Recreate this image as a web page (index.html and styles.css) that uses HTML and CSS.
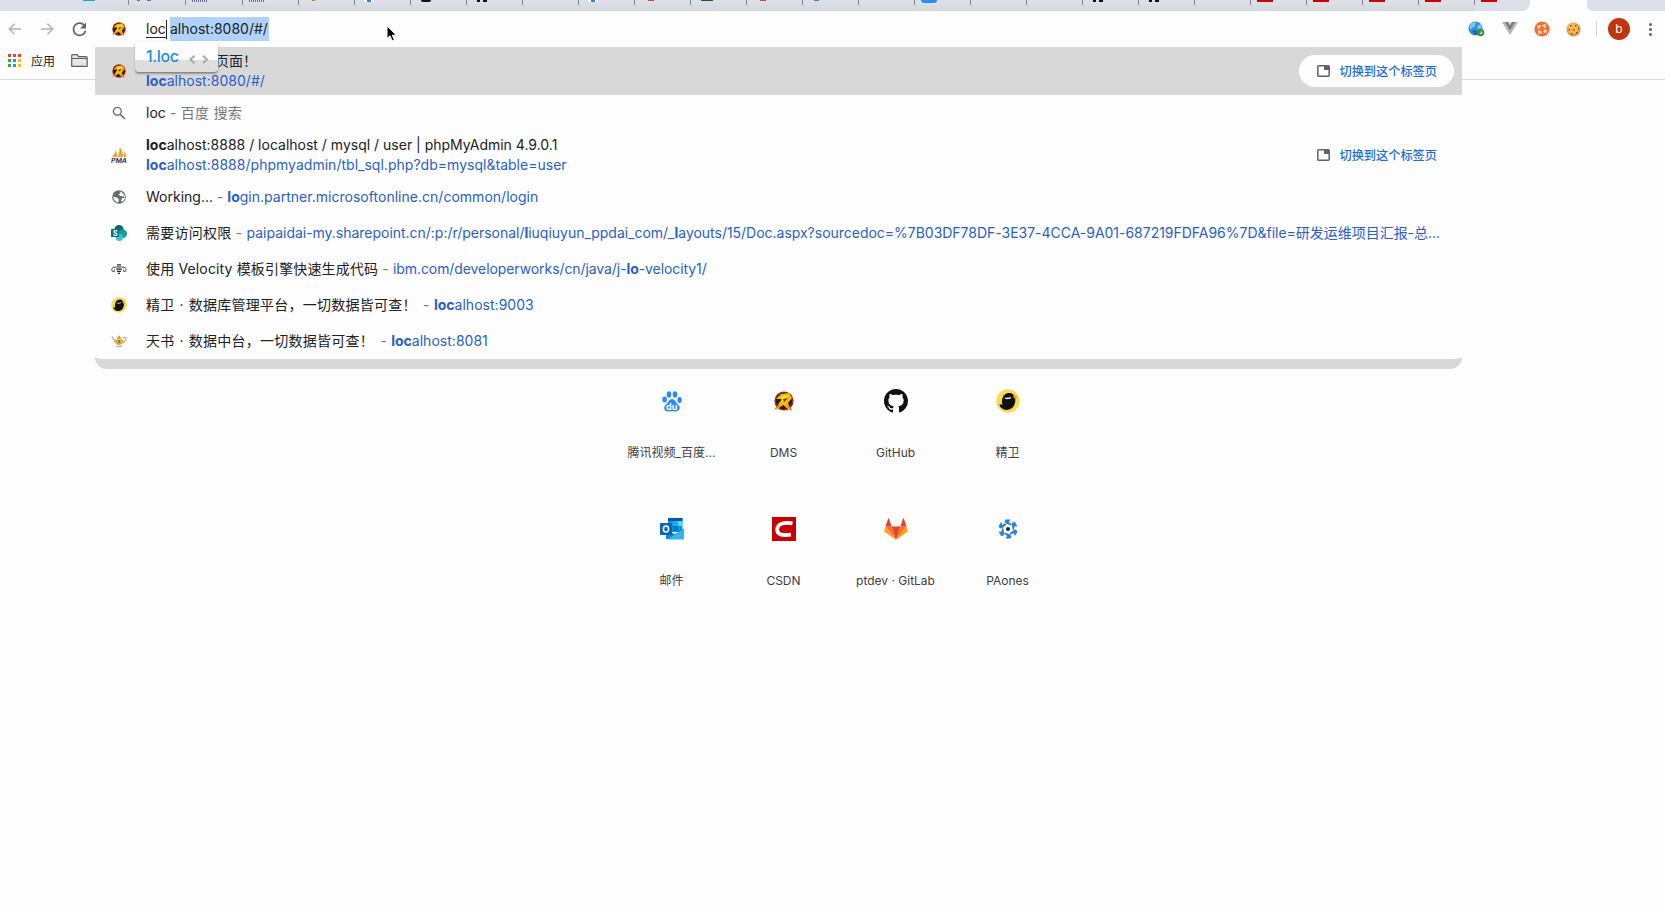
FILE: index.html
```
<!DOCTYPE html>
<html lang="zh-CN">
  <head>
    <meta charset="UTF-8" />
    <meta name="viewport" content="width=device-width, initial-scale=1.0" />
    <title>新标签页</title>
    <link rel="stylesheet" href="styles.css">
  </head>
  <body>
    <!-- Shared icons -->
    <svg class="defs" width="0" height="0">
      <symbol id="dms" viewBox="0 0 20 20">
        <circle cx="10" cy="10" r="9.6" fill="#a82418" />
        <circle cx="10" cy="10" r="8" fill="#241a12" />
        <path d="M2 8 7 3l8-1 3 5-4 5 3.500 8-5-3-3-3-8 5 4-8 4-3-3 0z" fill="#f5b80f" />
        <path d="M8 5l7-1-3 4-5 3z" fill="#ffe02e" />
        <path d="M9 8l5-1-4 4z" fill="#6b3a0c" />
        <path d="M1 18l5-4M13 14l4.500 5" stroke="#f07a1b" stroke-width="1.600" />
      </symbol>
      <symbol id="bird" viewBox="0 0 24 24">
        <circle cx="12" cy="12" r="11.700" fill="#f8dc58" />
        <path d="M7 8c1-4 8-5.500 10.500-2.500 2.500 3 2.500 8 0 12-3 4-9 4.500-12 1.500-1.500-1-2-2.500-2-4l3 1c-1-3-.8-5 .5-8z" fill="#111" />
        <path d="M9 8.500c1 1.500 2 1.500 3 .3 1 1 2 .8 2.600-.8" stroke="#fff" fill="none" stroke-width="1.200" />
        <path d="M17 5l4 2.500-1 3-2.500-2z" fill="#e8a520" />
      </symbol>
      <symbol id="switch" viewBox="0 0 13 12">
        <path d="M1.500.8h10a.8.8 0 0 1 .7.700v9a.8.8 0 0 1-.7.700h-10a.8.8 0 0 1-.7-.7v-9a.8.8 0 0 1 .7-.7z" fill="none" stroke="#5f6368" stroke-width="1.500" />
        <path d="M7 1h5.500v4H7z" fill="#5f6368" />
      </symbol>
    </svg>

    <div class="tab-strip">
      <div class="tab first"><i class="fav sky"></i></div>
      <div class="tab wide"><i class="fav slate"></i></div>
      <div class="tab wide"><i class="fav dots"></i></div>
      <div class="tab"><i class="fav dots"></i></div>
      <div class="tab"><i class="fav orange"></i></div>
      <div class="tab"><i class="fav white"></i></div>
      <div class="tab"><i class="fav black"></i></div>
      <div class="tab"><i class="fav cat"></i></div>
      <div class="tab"></div>
      <div class="tab"><i class="fav white"></i></div>
      <div class="tab"><i class="fav red"></i></div>
      <div class="tab"><i class="fav green"></i></div>
      <div class="tab"><i class="fav red"></i></div>
      <div class="tab"><i class="fav paw"></i></div>
      <div class="tab"></div>
      <div class="tab"><i class="fav blue"></i></div>
      <div class="tab"></div>
      <div class="tab"></div>
      <div class="tab"><i class="fav cat"></i></div>
      <div class="tab"><i class="fav cat"></i></div>
      <div class="tab"></div>
      <div class="tab"><i class="fav csdn"></i></div>
      <div class="tab"><i class="fav csdn"></i></div>
      <div class="tab"><i class="fav csdn"></i></div>
      <div class="tab"><i class="fav csdn"></i></div>
      <div class="tab last"><i class="fav csdn"></i></div>
      <div class="active-tab"></div>
      <div class="strip-end"></div>
    </div>

    <div class="toolbar">
      <svg class="nav" width="14" height="12" viewBox="0 0 14 12"><path d="M13 6H1.500M6.500.8 1.300 6l5.200 5.200" /></svg>
      <svg class="nav forward" width="14" height="12" viewBox="0 0 14 12"><path d="M1 6h11.500M7.500.8 12.700 6l-5.200 5.200" /></svg>
      <svg class="reload" width="15" height="15" viewBox="0 0 15 15"><path d="M12.200 3.300A6.100 6.100 0 1 0 13.500 8.800" fill="none" stroke="#5f6368" stroke-width="1.700" /><path d="M14 .5v6H8z" fill="#5f6368" /></svg>
      <svg class="site" width="14" height="14"><use href="#dms" /></svg>
      <div class="url"><span class="typed">loc</span><span class="completion">alhost:8080/#/</span></div>
      <div class="extensions">
        <svg width="18" height="16" viewBox="0 0 18 16">
          <circle cx="7.500" cy="7.500" r="7" fill="#2f8fd8" />
          <path d="M3 2l5-1-1 4-4 3-2-1zM9 5l4-2 1 4-4 2z" fill="#7fc4ee" />
          <path d="M4 10l4-1 1 4-2 1z" fill="#1b5fa8" />
          <circle cx="12.500" cy="11.500" r="2.800" fill="none" stroke="#3e8f2c" stroke-width="2" />
        </svg>
        <svg width="16" height="14" viewBox="0 0 16 14"><path d="M0 0h16L8 13z" fill="#b3b3b3" /><path d="M3 0h10L8 8z" fill="#777" /><path d="M6 0h4L8 3.500z" fill="#ddd" /></svg>
        <svg width="16" height="16" viewBox="0 0 16 16"><circle cx="8" cy="8" r="7.600" fill="#f9702b" /><circle cx="8" cy="8" r="3.700" fill="none" stroke="#fff" stroke-width="1.600" stroke-dasharray="3.800 2" /><path d="M3 4.500l1.500 1M11.500 3l-1 1.500M13 11.500l-1.500-1M4.500 13l1-1.500" stroke="#fff" stroke-width="1.200" /></svg>
        <svg width="15" height="15" viewBox="0 0 15 15"><circle cx="7.500" cy="7.500" r="7" fill="#e09a3c" /><circle cx="6.700" cy="6.500" r="5.600" fill="#f0b659" /><path d="M4 3h1.500v1.500H4zM9 3h1.500v1.500H9zM2.500 7H4v1.500H2.500zM7 7h1.500v1.500H7zM5 11h1.500v1.500H5zM10 10h1.500v1.500H10zM12 6h1v1.500h-1z" fill="#8a501f" /></svg>
        <div class="divider"></div>
        <div class="avatar">b</div>
        <div class="menu"><i></i><i></i><i></i></div>
      </div>
    </div>

    <div class="bookmarks">
      <div class="apps"><i class="r"></i><i class="r"></i><i class="r"></i><i class="g"></i><i class="b"></i><i class="y"></i><i class="g"></i><i class="b"></i><i class="y"></i></div>
      <span>应用</span>
      <svg width="17" height="13" viewBox="0 0 17 13"><path d="M.7 12V1.500q0-.8.8-.8H6l1.500 2H15q1.200 0 1.200 1V12q0 .4-.5.4H1.200q-.5 0-.5-.4zM.7 4.500h15.500" fill="#e6e6e6" stroke="#5f5f5f" stroke-width="1.200" /></svg>
    </div>

    <div class="suggestions">
      <div class="row double selected">
        <svg class="icon" width="14" height="14"><use href="#dms" /></svg>
        <div class="text">
          <p class="title page-title">页面！</p>
          <p class="link"><b>loc</b>alhost:8080/#/</p>
        </div>
        <div class="switch"><svg width="13" height="12"><use href="#switch" /></svg>切换到这个标签页</div>
      </div>
      <div class="row">
        <svg class="icon" width="14" height="14" viewBox="0 0 14 14"><circle cx="5.300" cy="5.300" r="3.900" fill="none" stroke="#6b6f73" stroke-width="1.400" /><path d="M8.300 8.300l4.700 4.700" stroke="#6b6f73" stroke-width="1.700" /></svg>
        <p class="text">loc<span class="muted cjk"> - 百度 搜索</span></p>
      </div>
      <div class="row double">
        <svg class="icon" width="16" height="16" viewBox="0 0 16 16"><path d="M1 10Q4 7 4.500 3q2 4 1.500 7zM6.500 10Q9 5 8.500 0q4 5 3.500 10zM12.500 10q1-3 .5-6 2 3 2.500 6z" fill="#f5a035" /><text x="0" y="15.500" font-size="6.500" font-weight="bold" font-style="italic" textLength="16" lengthAdjust="spacingAndGlyphs" fill="#39405e">PMA</text></svg>
        <div class="text">
          <p class="title"><b>loc</b>alhost:8888 / localhost / mysql / user | phpMyAdmin 4.9.0.1</p>
          <p class="link"><b>loc</b>alhost:8888/phpmyadmin/tbl_sql.php?db=mysql&amp;table=user</p>
        </div>
        <div class="switch"><svg width="13" height="12"><use href="#switch" /></svg>切换到这个标签页</div>
      </div>
      <div class="row">
        <svg class="icon" width="14" height="14" viewBox="0 0 14 14"><circle cx="7" cy="7" r="6.800" fill="#686c70" /><path d="M1.300 6.500l4 1.200 1.700 2-1 3Q1.500 11.500 1.300 6.500zM7.500 1.500l1 1.500-2 1.500L8.500 6l3.500.5.500 1.500-2.500 0-1 3 1.500.5q3-2 2.300-5.500Q11 2 7.500 1.500z" fill="#fff" /></svg>
        <p class="text">Working...<span class="muted"> - </span><span class="link"><b>lo</b>gin.partner.microsoftonline.cn/common/login</span></p>
      </div>
      <div class="row">
        <svg class="icon" width="16" height="16" viewBox="0 0 16 16"><circle cx="8" cy="4.700" r="4.700" fill="#036c70" /><circle cx="11.800" cy="8.800" r="4.200" fill="#1a9ba1" /><circle cx="8.400" cy="12.500" r="3.500" fill="#37c6d0" /><rect y="4" width="8" height="8" rx=".6" fill="#03787c" /><text x="2" y="10.500" font-size="7" font-weight="bold" fill="#fff">S</text></svg>
        <p class="text"><span class="cjk">需要访问权限<span class="muted"> - </span></span><span class="link long">paipaidai-my.sharepoint.cn/:p:/r/personal/<b>l</b>iuqiuyun_ppdai_com/_<b>l</b>ayouts/15/Doc.aspx?sourcedoc=%7B03DF78DF-3E37-4CCA-9A01-687219FDFA96%7D&amp;file=研发运维项目汇报-总...</span></p>
      </div>
      <div class="row">
        <svg class="icon" width="16" height="10" viewBox="0 0 16 10"><path d="M6 .8h4M5.300 3h5.400M5.300 5.200h5.400M6 7.300h4M7 9.300h2" stroke="#222" stroke-width="1.200" /><path d="M5 3Q1 2.500.7 5.500.8 8 3 7.500 4.500 7 3.500 5.500M11 3q4-.5 4.300 2.500Q15.200 8 13 7.500q-1.500-.5-.5-2" fill="none" stroke="#333" stroke-width=".9" /></svg>
        <p class="text"><span class="velocity">使用 Velocity 模板引擎快速生成代码<span class="muted"> - </span></span><span class="link ibm">ibm.com/developerworks/cn/java/j-<b>lo</b>-velocity1/</span></p>
      </div>
      <div class="row">
        <svg class="icon" width="16" height="16"><use href="#bird" /></svg>
        <p class="text"><span class="cjk">精卫<span class="dot">·</span>数据库管理平台，一切数据皆可查！<span class="muted after-mark"> - </span></span><span class="link"><b>loc</b>alhost:9003</span></p>
      </div>
      <div class="row">
        <svg class="icon" width="16" height="12" viewBox="0 0 16 12"><path d="M1 1.500q2 4 4 6M12 3q3.500-2 3 1-.5 3-4 4" fill="none" stroke="#e07a5a" /><path d="M3.500 4.500h9q0 4-3.500 5.500H7Q3.500 8 3.500 4.500z" fill="#e9a72b" /><path d="M5.500 4 8 .3 10.500 4z" fill="#d99a20" /><path d="M7 5h2v3H7z" fill="#3e9aa0" /><path d="M5 11.300h6" stroke="#d09a80" /></svg>
        <p class="text"><span class="cjk">天书<span class="dot">·</span>数据中台，一切数据皆可查！<span class="muted after-mark"> - </span></span><span class="link"><b>loc</b>alhost:8081</span></p>
      </div>
    </div>

    <!-- Input method candidates -->
    <div class="ime"><span>1.loc</span><svg width="20" height="9" viewBox="0 0 20 9"><path d="M5.500.8 1.500 4.500l4 3.700M14 .8l4 3.700-4 3.700" /></svg></div>

    <svg class="cursor" width="13" height="17" viewBox="0 0 13 17"><path d="M1 1v12.500l3-2.700 2.200 5 2.200-1-2.200-4.600h4.300z" fill="#000" stroke="#fff" /></svg>

    <div class="shortcuts">
      <div class="tile">
        <svg width="24" height="24" viewBox="0 0 24 24"><g fill="#3088f4"><ellipse cx="4.600" cy="10.500" rx="2.300" ry="3" /><ellipse cx="9" cy="5.500" rx="2.300" ry="3.200" /><ellipse cx="15" cy="5.500" rx="2.300" ry="3.200" /><ellipse cx="19.600" cy="11" rx="2.300" ry="3" /><path d="M12 10c3 0 4 4 6.500 6 3 3 0 7-3 6.500-2-.4-5-.4-7 0-3.500.5-6-3.500-3-6.500C8 14 9 10 12 10z" /></g><text x="6" y="20.500" font-size="9" font-weight="bold" fill="#fff">du</text></svg>
        <span>腾讯视频_百度...</span>
      </div>
      <div class="tile">
        <svg width="20" height="20"><use href="#dms" /></svg>
        <span>DMS</span>
      </div>
      <div class="tile">
        <svg width="24" height="24" viewBox="0 0 16 16"><path d="M8 0C3.580 0 0 3.580 0 8c0 3.540 2.290 6.530 5.470 7.590.4.070.55-.17.55-.38 0-.19-.01-.82-.01-1.490-2.010.37-2.530-.49-2.690-.94-.09-.23-.48-.94-.82-1.130-.28-.15-.68-.52-.01-.53.63-.01 1.080.58 1.230.82.720 1.210 1.870.87 2.330.66.070-.52.28-.87.51-1.070-1.780-.2-3.640-.89-3.640-3.950 0-.87.31-1.590.82-2.150-.08-.2-.36-1.020.08-2.120 0 0 .67-.21 2.200.82.640-.18 1.320-.27 2-.27s1.360.09 2 .27c1.530-1.040 2.200-.82 2.200-.82.440 1.100.16 1.920.08 2.120.51.56.82 1.270.82 2.150 0 3.070-1.870 3.750-3.650 3.950.29.25.54.73.54 1.480 0 1.070-.01 1.930-.01 2.200 0 .21.15.46.55.38A8.010 8.010 0 0 0 16 8c0-4.420-3.580-8-8-8z" fill="#111" /></svg>
        <span>GitHub</span>
      </div>
      <div class="tile">
        <svg width="24" height="24"><use href="#bird" /></svg>
        <span>精卫</span>
      </div>
      <div class="tile">
        <svg width="24" height="22" viewBox="0 0 24 22"><path d="M8 0h14.500v14H8z" fill="#1490df" /><path d="M8 0h14.500v3H8z" fill="#0358a7" /><path d="M13 3h5v5h-5z" fill="#28a8ea" /><path d="M18 3h4.500v5H18z" fill="#50d9ff" /><path d="M13 8h5v5h-5z" fill="#0078d4" /><path d="M6 12l9 4 9-5.500V21H6z" fill="#1a86d4" /><path d="M24 11v10.500H7z" fill="#36b4ee" /><rect y="5" width="12" height="12" rx="1" fill="#0a64bd" /><ellipse cx="6" cy="11" rx="2.600" ry="3" fill="none" stroke="#fff" stroke-width="1.600" /></svg>
        <span>邮件</span>
      </div>
      <div class="tile">
        <svg width="24" height="24" viewBox="0 0 24 24"><path d="M0 0h24v24H0z" fill="#c90000" /><path d="M20.500 6.300C13 5 5.500 6 5.200 12.500 5 18.500 12 18.500 19 17.700" fill="none" stroke="#fff" stroke-width="3.800" /></svg>
        <span>CSDN</span>
      </div>
      <div class="tile">
        <svg width="24" height="22" viewBox="0 0 24 22"><path d="M12 22 7.600 8.500h8.800z" fill="#e24329" /><path d="M12 22 7.600 8.500H1.500zM12 22l4.400-13.500h6.100z" fill="#fc6d26" /><path d="M1.500 8.500.1 12.700q-.2.700.4 1.100L12 22zM22.500 8.500l1.400 4.200q.2.700-.4 1.100L12 22z" fill="#fca326" /><path d="M1.500 8.500h6.100L5 .5q-.4-.7-.8 0zM22.500 8.500h-6.100L19 .5q.4-.7.8 0z" fill="#e24329" /></svg>
        <span>ptdev · GitLab</span>
      </div>
      <div class="tile">
        <svg width="20" height="20" viewBox="-10 -10 20 20">
          <path id="blade" d="M-2.500-9.500 2.500-9.500.8-7 4-4.500 2.500-3.800-1.500-5.300-3.500-7z" fill="#2481dc" />
          <use href="#blade" transform="rotate(60)" /><use href="#blade" transform="rotate(120)" /><use href="#blade" transform="rotate(180)" /><use href="#blade" transform="rotate(240)" /><use href="#blade" transform="rotate(300)" />
          <circle r="2" fill="#222" />
        </svg>
        <span>PAones</span>
      </div>
    </div>
  </body>
</html>
```
FILE: styles.css
```
* {
  box-sizing: border-box;
  margin: 0;
  padding: 0;
}
body {
  font-family: Inter, "Noto Sans CJK SC", sans-serif;
  font-size: 14px;
  color: #202124;
  background: #fdfdfd;
  height: 910px;
  overflow: hidden;
  position: relative;
}
svg {
  display: block;
  flex: none;
}
.defs {
  position: absolute;
}

/* Tabs */
.tab-strip {
  display: flex;
  height: 11px;
  background: linear-gradient(#dbdfe7 3px, #d6d9de 9px, #d3d3d4) 0 0 / 1475px 11px no-repeat;
}
.tab {
  width: 56px;
  flex: none;
  padding-left: 7px;
  background: linear-gradient(#85878b, #85878b) 0 0 / 1px 5px no-repeat;
}
.tab.first {
  width: 128px;
  padding-left: 83px;
  background: linear-gradient(90deg, #dbdfe7 85px, transparent);
}
.tab.wide {
  width: 57px;
}
.tab.last {
  background: linear-gradient(#85878b, #85878b) 0 0 / 1px 5px no-repeat, #dbdfe7;
  border-bottom-right-radius: 8px;
}
.active-tab {
  width: 57px;
}
.strip-end {
  flex: 1;
  background: #dbdfe7;
  border-bottom-left-radius: 6px;
}
.fav {
  display: block;
  width: 16px;
  height: 2px;
}
.sky {
  width: 12px;
  height: 1px;
  background: #1aa0e8;
}
.slate {
  width: 14px;
  margin-left: 2px;
  height: 1px;
  background: linear-gradient(90deg, #56799e 3px, transparent 3px 10px, #56799e 10px);
}
.dots {
  background: repeating-linear-gradient(90deg, #6a6a94 0 1px, #dfe2ea 1px 2px);
}
.orange {
  width: 3px;
  height: 1px;
  margin-left: 7px;
  background: #f26b21;
}
.white {
  width: 10px;
  margin-left: 3px;
  background: linear-gradient(90deg, #fff 3px, #2f80e0 3px 7px, #fff 7px);
  border-radius: 0 0 5px 5px;
}
.black {
  width: 10px;
  margin-left: 4px;
  background: #111;
  border-radius: 0 0 5px 5px;
}
.cat {
  width: 10px;
  margin-left: 4px;
  background: linear-gradient(90deg, #111 3px, transparent 3px 6px, #111 6px);
}
.red {
  width: 6px;
  height: 1px;
  margin-left: 7px;
  background: #d4482f;
}
.green {
  width: 12px;
  height: 1px;
  margin-left: 4px;
  background: #0d5c34;
}
.paw {
  width: 5px;
  height: 1px;
  margin-left: 5px;
  background: #3b82d8;
}
.blue {
  height: 3px;
  background: #2d8cff;
  border-radius: 0 0 3px 3px;
}
.csdn {
  background: #c90000;
}

/* Toolbar */
.toolbar {
  display: flex;
  align-items: center;
  height: 36px;
  padding-left: 8px;
}
.nav {
  fill: none;
  stroke: #b1b3b5;
  stroke-width: 1.5;
}
.forward {
  margin-left: 18px;
}
.reload {
  margin-left: 18px;
}
.site {
  margin-left: 25px;
}
.url {
  display: flex;
  margin-left: 20px;
  line-height: 24px;
}
.typed {
  height: 19px;
  line-height: 18px;
  margin: 3px 3px 0 0;
  width: 21px;
  border-right: 1px solid #222;
  text-decoration: underline;
  text-underline-offset: 3px;
}
.completion {
  width: 99px;
  background: #b0d2fa;
}
.extensions {
  display: flex;
  align-items: center;
  margin-left: auto;
  gap: 16px;
  padding-right: 13px;
}
.divider {
  width: 1px;
  height: 16px;
  background: #d0d2d5;
  margin-left: -1px;
}
.avatar {
  width: 22px;
  height: 22px;
  border-radius: 50%;
  background: #bf360c;
  color: #fff;
  font-size: 12px;
  line-height: 22px;
  text-align: center;
  margin-left: -5px;
}
.menu {
  display: flex;
  flex-direction: column;
  gap: 2px;
  margin-left: 3px;
}
.menu i {
  width: 3px;
  height: 3px;
  border-radius: 50%;
  background: #5f6368;
}

/* Bookmarks bar */
.bookmarks {
  display: flex;
  align-items: center;
  height: 33px;
  padding: 0 8px 5px;
  font-size: 12px;
  border-bottom: 1px solid #d9dadf;
}
.bookmarks span {
  width: 40px;
  margin-left: 9px;
  margin-top: -1px;
}
.apps {
  display: grid;
  grid-template-columns: repeat(3, 4px);
  gap: 1px;
}
.apps i {
  height: 3px;
  width: 3px;
  margin-bottom: 1px;
}
.r { background: #ea4335; }
.g { background: #34a853; }
.b { background: #4285f4; }
.y { background: #fbbc05; }

/* Suggestion dropdown, covers the page */
.suggestions {
  position: absolute;
  top: 47px;
  left: 95px;
  width: 1367px;
  height: 322px;
  background: #fdfdfd;
  border-bottom: 10px solid #d8d8d8;
  border-radius: 0 0 12px 12px;
}
.row {
  display: flex;
  align-items: center;
  height: 36px;
  padding: 0 8px 0 51px;
  position: relative;
}
.double {
  height: 48px;
}
.selected {
  background: #d8d8d8;
}
.icon {
  position: absolute;
  left: 24px;
  transform: translateX(-50%);
}
.text {
  white-space: nowrap;
  line-height: 20px;
}
.page-title {
  padding-left: 69px;
}
.cjk {
  letter-spacing: 0.25px;
}
.velocity {
  letter-spacing: 0.15px;
}
.dot {
  margin: 0 5px;
}
.after-mark {
  margin-left: 2px;
}
.link {
  color: #2a5fc8;
  letter-spacing: 0.02px;
}
.link.long {
  letter-spacing: -0.02px;
}
.link.ibm {
  letter-spacing: -0.08px;
}
.muted {
  color: #76797c;
}
.text b {
  font-weight: 700;
}
.switch {
  display: flex;
  align-items: center;
  gap: 10px;
  margin-left: auto;
  height: 32px;
  padding: 0 17px 0 18px;
  border-radius: 16px;
  background: #fdfdfd;
  color: #1a6be0;
  font-size: 12.2px;
  font-weight: 500;
}

.ime {
  position: absolute;
  top: 41px;
  left: 135px;
  width: 83px;
  height: 32px;
  display: flex;
  align-items: center;
  gap: 10px;
  padding-left: 11px;
  font-size: 16px;
  font-weight: 500;
  letter-spacing: -0.35px;
  color: #1a8fd8;
  background: linear-gradient(#fdfdfd 19px, #dedede 19px);
  border-radius: 4px;
  border-bottom: 1px solid #888;
  box-shadow: 0 1px 2px #999;
}
.ime span {
  margin-top: -1px;
}
.ime svg {
  margin-top: 5px;
  fill: none;
  stroke: #aaa;
  stroke-width: 2;
}
.cursor {
  position: absolute;
  left: 386px;
  top: 25px;
}

/* Shortcuts */
.shortcuts {
  display: grid;
  grid-template-columns: repeat(4, 112px);
  grid-auto-rows: 128px;
  justify-content: center;
  padding-top: 309px;
  margin-left: 14px;
}
.tile {
  display: flex;
  flex-direction: column;
  align-items: center;
  font-size: 12px;
  color: #3c4043;
}
.tile svg {
  height: 24px;
}
.tile span {
  margin-top: 30px;
  line-height: 20px;
  white-space: nowrap;
}
```
